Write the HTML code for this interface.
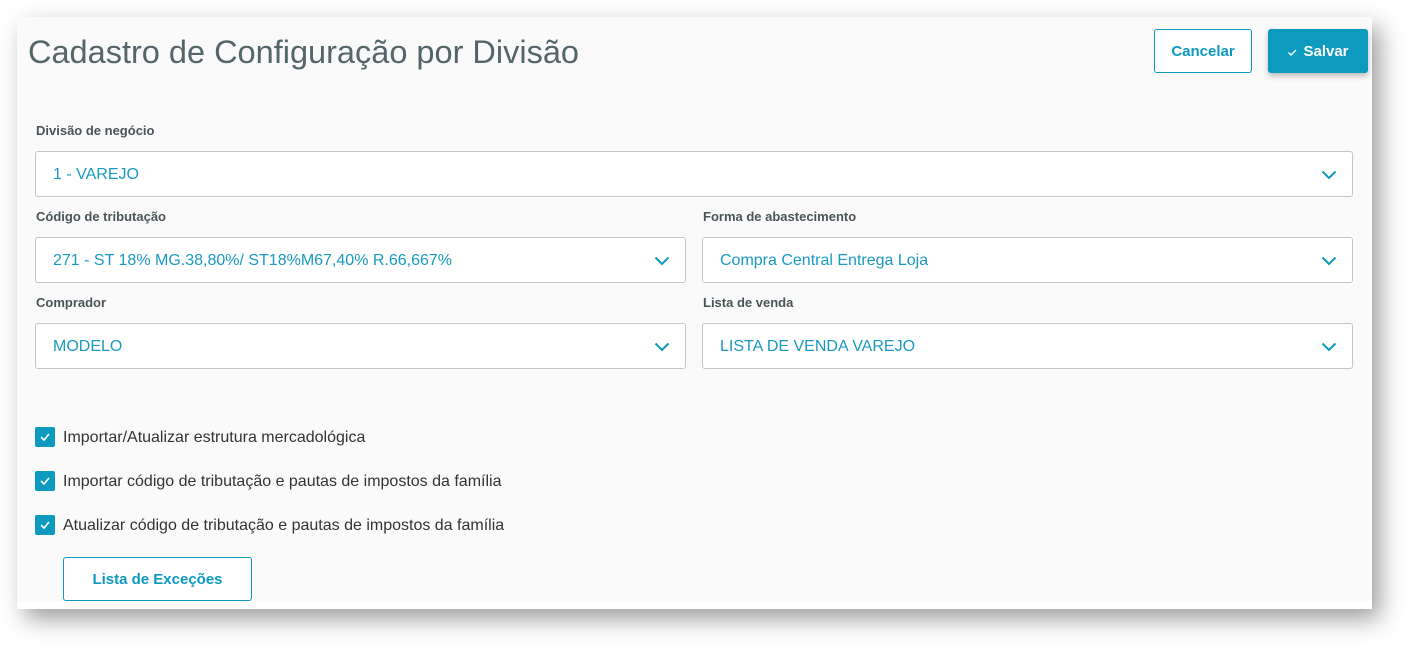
<!DOCTYPE html>
<html><head><meta charset="utf-8"><style>
body{margin:0;width:1420px;height:658px;background:#fff;font-family:"Liberation Sans",sans-serif;position:relative;overflow:hidden}
.panel{position:absolute;left:17px;top:17px;width:1355px;height:592px;background:#fafafa;box-shadow:8px 10px 22px rgba(0,0,0,0.38)}
.panel:after{content:"";position:absolute;left:0;bottom:0;width:100%;height:8px;background:#fff}
h1{position:absolute;left:28px;top:34px;margin:0;font-weight:normal;font-size:32.5px;color:#55666a}
.lbl{position:absolute;font-size:13px;color:#4a5458;font-weight:bold}
.sel{position:absolute;background:#fff;border:1px solid #c2c6c8;border-radius:3px;box-sizing:border-box}
.sel span{position:absolute;left:17px;font-size:16px;color:#1a9ac0}
.sel svg{position:absolute;right:15px}
.cb{position:absolute;left:35px;width:20px;height:20px;background:#0c9abe;border-radius:2px}
.cb svg{position:absolute;left:5px;top:6px}
.ct{position:absolute;left:63px;font-size:16px;color:#333}
.btn{position:absolute;box-sizing:border-box;border-radius:3px;font-weight:bold;font-size:15px;text-align:center}
</style></head><body>
<div class="panel"></div>
<h1>Cadastro de Configuração por Divisão</h1>
<div class="btn" style="left:1154px;top:29px;width:98px;height:44px;border:1px solid #0c9abe;color:#0c9abe;line-height:44px;background:#fff">Cancelar</div>
<div class="btn" style="left:1268px;top:29px;width:100px;height:44px;background:#0c9abe;color:#fff;line-height:46px;box-shadow:0 3px 6px rgba(0,0,0,0.25)"><svg width="10" height="8" viewBox="0 0 10 8" style="margin-right:6px"><path d="M1.5 4.5l2.5 2.5 5-5" fill="none" stroke="#fff" stroke-width="1.4"/></svg>Salvar</div>

<div class="lbl" style="left:36px;top:123px">Divisão de negócio</div>
<div class="sel" style="left:35px;top:151px;width:1318px;height:46px"><span style="top:14px">1 - VAREJO</span><svg width="16" height="10" viewBox="0 0 16 10" style="top:18px"><path d="M1.5 1.5l6.5 6.5 6.5-6.5" fill="none" stroke="#0c9abe" stroke-width="2"/></svg></div>

<div class="lbl" style="left:36px;top:209px">Código de tributação</div>
<div class="sel" style="left:35px;top:237px;width:651px;height:46px"><span style="top:14px">271 - ST 18% MG.38,80%/ ST18%M67,40% R.66,667%</span><svg width="16" height="10" viewBox="0 0 16 10" style="top:18px"><path d="M1.5 1.5l6.5 6.5 6.5-6.5" fill="none" stroke="#0c9abe" stroke-width="2"/></svg></div>
<div class="lbl" style="left:703px;top:209px">Forma de abastecimento</div>
<div class="sel" style="left:702px;top:237px;width:651px;height:46px"><span style="top:14px">Compra Central Entrega Loja</span><svg width="16" height="10" viewBox="0 0 16 10" style="top:18px"><path d="M1.5 1.5l6.5 6.5 6.5-6.5" fill="none" stroke="#0c9abe" stroke-width="2"/></svg></div>

<div class="lbl" style="left:36px;top:295px">Comprador</div>
<div class="sel" style="left:35px;top:323px;width:651px;height:46px"><span style="top:14px">MODELO</span><svg width="16" height="10" viewBox="0 0 16 10" style="top:18px"><path d="M1.5 1.5l6.5 6.5 6.5-6.5" fill="none" stroke="#0c9abe" stroke-width="2"/></svg></div>
<div class="lbl" style="left:703px;top:295px">Lista de venda</div>
<div class="sel" style="left:702px;top:323px;width:651px;height:46px"><span style="top:14px">LISTA DE VENDA VAREJO</span><svg width="16" height="10" viewBox="0 0 16 10" style="top:18px"><path d="M1.5 1.5l6.5 6.5 6.5-6.5" fill="none" stroke="#0c9abe" stroke-width="2"/></svg></div>

<div class="cb" style="top:427px"><svg width="10" height="8" viewBox="0 0 10 8"><path d="M1 4l3 3 5-6" fill="none" stroke="#fff" stroke-width="1.6"/></svg></div>
<div class="ct" style="top:429px">Importar/Atualizar estrutura mercadológica</div>
<div class="cb" style="top:471px"><svg width="10" height="8" viewBox="0 0 10 8"><path d="M1 4l3 3 5-6" fill="none" stroke="#fff" stroke-width="1.6"/></svg></div>
<div class="ct" style="top:473px">Importar código de tributação e pautas de impostos da família</div>
<div class="cb" style="top:515px"><svg width="10" height="8" viewBox="0 0 10 8"><path d="M1 4l3 3 5-6" fill="none" stroke="#fff" stroke-width="1.6"/></svg></div>
<div class="ct" style="top:517px">Atualizar código de tributação e pautas de impostos da família</div>

<div class="btn" style="left:63px;top:557px;width:189px;height:44px;border:1px solid #0c9abe;color:#0c9abe;line-height:44px;background:#fff">Lista de Exceções</div>
</body></html>
